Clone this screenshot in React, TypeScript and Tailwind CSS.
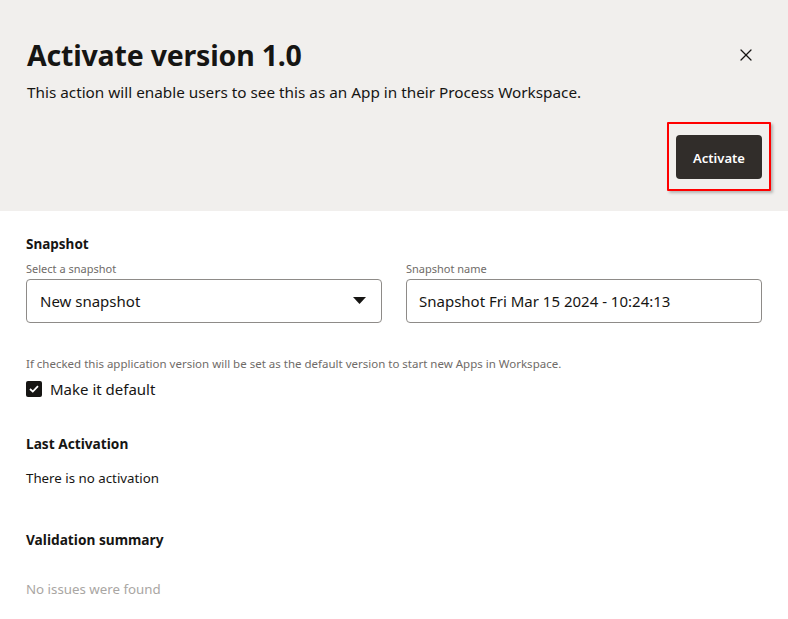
import React from 'react';
import { X } from 'lucide-react';

const App: React.FC = () => {
  return (
    <div className="min-h-[619px] w-[788px] bg-white text-[#161513]" style={{ fontFamily: '"Noto Sans", "Open Sans", sans-serif' }}>
      {/* Header */}
      <header className="relative h-[211px] bg-[#f1efed] px-[27px] pt-[37px]">
        <h1 className="text-[28.5px] font-bold leading-[36px] tracking-[-0.2px]">Activate version 1.0</h1>
        <p className="mt-[8px] text-[15.3px] leading-[22px] text-[#161513]">
          This action will enable users to see this as an App in their Process Workspace.
        </p>
        <button className="absolute right-[32px] top-[45px] text-[#161513]" aria-label="Close">
          <X size={20} strokeWidth={1.5} />
        </button>
        <div className="absolute right-[17px] top-[122px] rounded-[1px] border-2 border-[#ff0000] px-[7px] pb-[10px] pt-[11px] shadow-[2px_2px_3px_rgba(0,0,0,0.25)]">
          <button className="flex h-[44px] w-[86px] items-center justify-center rounded-[4px] bg-[#312d2a] pt-[3px] text-[13px] font-semibold text-white">
            Activate
          </button>
        </div>
      </header>

      {/* Body */}
      <main className="px-[26px] pt-[23px]">
        <h2 className="text-[13.5px] font-bold leading-[20px]">Snapshot</h2>
        <div className="mt-[8px] grid grid-cols-2 gap-[24px]">
          <div>
            <label className="block text-[11px] leading-[14px] text-[#6f6b68]">Select a snapshot</label>
            <div className="mt-[3px] flex h-[44px] items-center justify-between rounded-[4px] border border-[#8e8b88] px-[13px]">
              <span className="text-[15px]">New snapshot</span>
              <svg width="13" height="8" viewBox="0 0 13 8" className="mr-[2px]">
                <path d="M0 0 H13 L6.5 7 Z" fill="#161513" />
              </svg>
            </div>
          </div>
          <div>
            <label className="block text-[11px] leading-[14px] text-[#6f6b68]">Snapshot name</label>
            <div className="mt-[3px] flex h-[44px] items-center rounded-[4px] border border-[#8e8b88] px-[12px]">
              <span className="text-[15px]">Snapshot Fri Mar 15 2024 - 10:24:13</span>
            </div>
          </div>
        </div>

        <p className="mt-[34px] text-[11.5px] leading-[14px] text-[#6f6b68]">
          If checked this application version will be set as the default version to start new Apps in Workspace.
        </p>
        <label className="mt-[7px] flex items-center gap-[8px]">
          <span className="flex h-[16px] w-[16px] items-center justify-center rounded-[2px] bg-[#161513]">
            <svg width="10" height="8" viewBox="0 0 10 8">
              <path d="M1 4 L3.8 6.6 L9 1.2" fill="none" stroke="white" strokeWidth="1.8" />
            </svg>
          </span>
          <span className="text-[15px] leading-[22px]">Make it default</span>
        </label>

        <h2 className="mt-[34px] text-[13.7px] font-bold leading-[20px]">Last Activation</h2>
        <p className="mt-[14px] text-[13.3px] leading-[20px]">There is no activation</p>

        <h2 className="mt-[42px] text-[13.7px] font-bold leading-[20px]">Validation summary</h2>
        <p className="mt-[29px] text-[13.3px] leading-[20px] text-[#a9a6a3]">No issues were found</p>
      </main>
    </div>
  );
};

export default App;
